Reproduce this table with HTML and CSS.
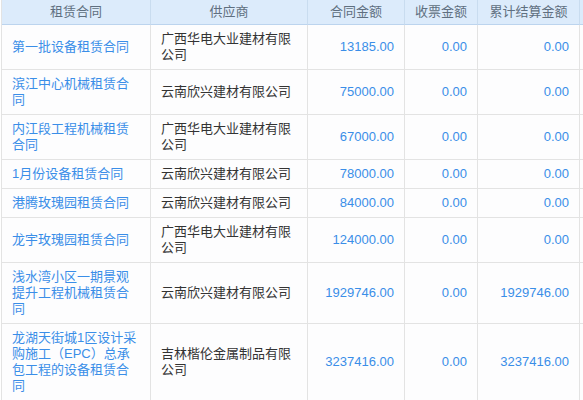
FILE: index.html
```html
<!DOCTYPE html>
<html lang="zh-CN">
<head>
<meta charset="utf-8">
<link rel="stylesheet" href="styles.css">
</head>
<body>
<div class="wrap">
<table class="grid">
  <thead>
    <tr>
      <th class="c1">租赁合同</th>
      <th class="c2">供应商</th>
      <th class="c3">合同金额</th>
      <th class="c4">收票金额</th>
      <th class="c5">累计结算金额</th>
      <th class="c6"></th>
    </tr>
  </thead>
  <tbody>
    <tr><td><a class="link">第一批设备租赁合同</a></td><td class="sup">广西华电大业建材有限公司</td><td class="num">13185.00</td><td class="num">0.00</td><td class="num">0.00</td><td class="c6"></td></tr>
    <tr><td><a class="link">滨江中心机械租赁合同</a></td><td class="sup">云南欣兴建材有限公司</td><td class="num">75000.00</td><td class="num">0.00</td><td class="num">0.00</td><td class="c6"></td></tr>
    <tr><td><a class="link">内江段工程机械租赁合同</a></td><td class="sup">广西华电大业建材有限公司</td><td class="num">67000.00</td><td class="num">0.00</td><td class="num">0.00</td><td class="c6"></td></tr>
    <tr><td><a class="link">1月份设备租赁合同</a></td><td class="sup">云南欣兴建材有限公司</td><td class="num">78000.00</td><td class="num">0.00</td><td class="num">0.00</td><td class="c6"></td></tr>
    <tr><td><a class="link">港腾玫瑰园租赁合同</a></td><td class="sup">云南欣兴建材有限公司</td><td class="num">84000.00</td><td class="num">0.00</td><td class="num">0.00</td><td class="c6"></td></tr>
    <tr><td><a class="link">龙宇玫瑰园租赁合同</a></td><td class="sup">广西华电大业建材有限公司</td><td class="num">124000.00</td><td class="num">0.00</td><td class="num">0.00</td><td class="c6"></td></tr>
    <tr><td><a class="link">浅水湾小区一期景观提升工程机械租赁合同</a></td><td class="sup">云南欣兴建材有限公司</td><td class="num">1929746.00</td><td class="num">0.00</td><td class="num">1929746.00</td><td class="c6"></td></tr>
    <tr><td><a class="link">龙湖天街城1区设计采购施工（EPC）总承包工程的设备租赁合同</a></td><td class="sup">吉林楷伦金属制品有限公司</td><td class="num">3237416.00</td><td class="num">0.00</td><td class="num">3237416.00</td><td class="c6"></td></tr>
  </tbody>
</table>
</div>
</body>
</html>
```

FILE: styles.css
```css
html, body {
  margin: 0;
  padding: 0;
  background: #ffffff;
}
body {
  font-family: "Liberation Sans", "Noto Sans CJK SC", sans-serif;
  font-size: 13px;
  line-height: 16px;
  color: #333333;
}
.wrap {
  padding-left: 1px;
  width: 582px;
  overflow: hidden;
}
.grid {
  table-layout: fixed;
  border-collapse: separate;
  border-spacing: 0;
  width: 582px;
  border-left: 1px solid #e3e3e3;
  background: #fdfdfe;
}
.grid th, .grid td {
  box-sizing: border-box;
  padding: 6px 10px;
  border-right: 1px solid #e3e3e3;
  border-bottom: 1px solid #e3e3e3;
  vertical-align: middle;
  text-align: left;
  word-break: break-all;
}
.grid th {
  padding: 4px 10px;
  height: 25px;
  background: #dcebfb;
  color: #5f6f80;
  font-weight: normal;
  text-align: center;
  border-right-color: #c9dcef;
  border-bottom-color: #bcd4ee;
}
.grid .c1 { width: 149px; }
.grid .c2 { width: 157px; }
.grid .c3 { width: 97px; }
.grid .c4 { width: 73px; }
.grid .c5 { width: 102px; }
.grid .c6 { width: 3px; padding: 0; border-right: none; }
.link {
  color: #3a8ee8;
  cursor: pointer;
}
.sup {
  color: #333333;
}
.num {
  text-align: right !important;
  color: #3a8ee8;
}
```
